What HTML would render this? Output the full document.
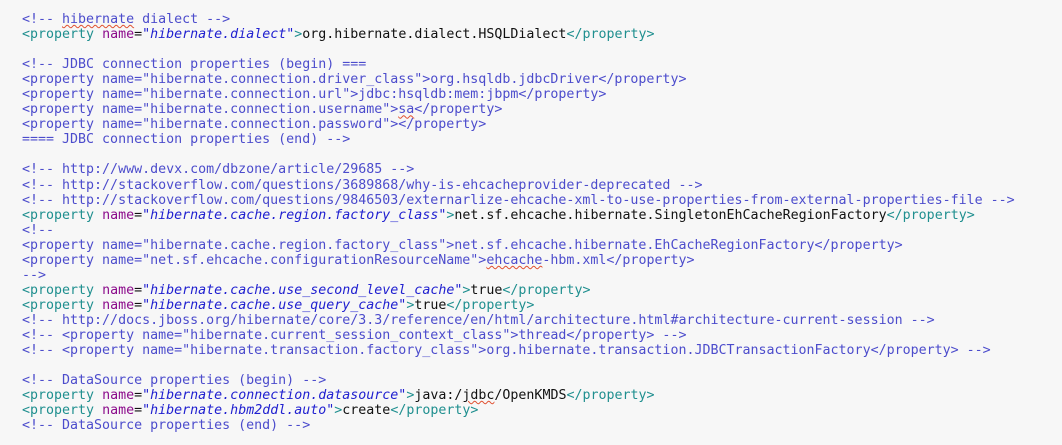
<!DOCTYPE html>
<html><head><meta charset="utf-8"><style>
html,body{margin:0;padding:0;background:#f7f7f7;width:1062px;height:445px;overflow:hidden}
pre{margin:0;position:absolute;left:22px;top:12px;font-family:"DejaVu Sans Mono","Liberation Mono",monospace;font-size:13.3px;line-height:15.04px;color:#111}
.c{color:#4c4ccc}
.t{color:#1f8f8f}
.a{color:#8b0a8b}
.v{color:#2020d0;font-style:italic}
.s{text-decoration:underline wavy #e05030;text-decoration-thickness:1px}
</style></head><body>
<pre><span class="c">&lt;!-- <span class="s">hibernate</span> dialect --&gt;</span>
<span class="t">&lt;property</span> <span class="a">name</span>=<span class="v">"hibernate.dialect"</span><span class="t">&gt;</span>org.hibernate.dialect.HSQLDialect<span class="t">&lt;/property&gt;</span>

<span class="c">&lt;!-- JDBC connection properties (begin) ===
&lt;property name="hibernate.connection.driver_class"&gt;org.hsqldb.jdbcDriver&lt;/property&gt;
&lt;property name="hibernate.connection.url"&gt;jdbc:hsqldb:mem:jbpm&lt;/property&gt;
&lt;property name="hibernate.connection.username"&gt;<span class="s">sa</span>&lt;/property&gt;
&lt;property name="hibernate.connection.password"&gt;&lt;/property&gt;
==== JDBC connection properties (end) --&gt;</span>

<span class="c">&lt;!-- http://www.devx.com/dbzone/article/29685 --&gt;</span>
<span class="c">&lt;!-- http://stackoverflow.com/questions/3689868/why-is-ehcacheprovider-deprecated --&gt;</span>
<span class="c">&lt;!-- http://stackoverflow.com/questions/9846503/externarlize-ehcache-xml-to-use-properties-from-external-properties-file --&gt;</span>
<span class="t">&lt;property</span> <span class="a">name</span>=<span class="v">"hibernate.cache.region.factory_class"</span><span class="t">&gt;</span>net.sf.ehcache.hibernate.SingletonEhCacheRegionFactory<span class="t">&lt;/property&gt;</span>
<span class="c">&lt;!--
&lt;property name="hibernate.cache.region.factory_class"&gt;net.sf.ehcache.hibernate.EhCacheRegionFactory&lt;/property&gt;
&lt;property name="net.sf.ehcache.configurationResourceName"&gt;<span class="s">ehcache</span>-hbm.xml&lt;/property&gt;
--&gt;</span>
<span class="t">&lt;property</span> <span class="a">name</span>=<span class="v">"hibernate.cache.use_second_level_cache"</span><span class="t">&gt;</span>true<span class="t">&lt;/property&gt;</span>
<span class="t">&lt;property</span> <span class="a">name</span>=<span class="v">"hibernate.cache.use_query_cache"</span><span class="t">&gt;</span>true<span class="t">&lt;/property&gt;</span>
<span class="c">&lt;!-- http://docs.jboss.org/hibernate/core/3.3/reference/en/html/architecture.html#architecture-current-session --&gt;</span>
<span class="c">&lt;!-- &lt;property name="hibernate.current_session_context_class"&gt;thread&lt;/property&gt; --&gt;</span>
<span class="c">&lt;!-- &lt;property name="hibernate.transaction.factory_class"&gt;org.hibernate.transaction.JDBCTransactionFactory&lt;/property&gt; --&gt;</span>

<span class="c">&lt;!-- DataSource properties (begin) --&gt;</span>
<span class="t">&lt;property</span> <span class="a">name</span>=<span class="v">"hibernate.connection.datasource"</span><span class="t">&gt;</span>java:/<span class="s">jdbc</span>/OpenKMDS<span class="t">&lt;/property&gt;</span>
<span class="t">&lt;property</span> <span class="a">name</span>=<span class="v">"hibernate.hbm2ddl.auto"</span><span class="t">&gt;</span>create<span class="t">&lt;/property&gt;</span>
<span class="c">&lt;!-- DataSource properties (end) --&gt;</span></pre>
</body></html>
